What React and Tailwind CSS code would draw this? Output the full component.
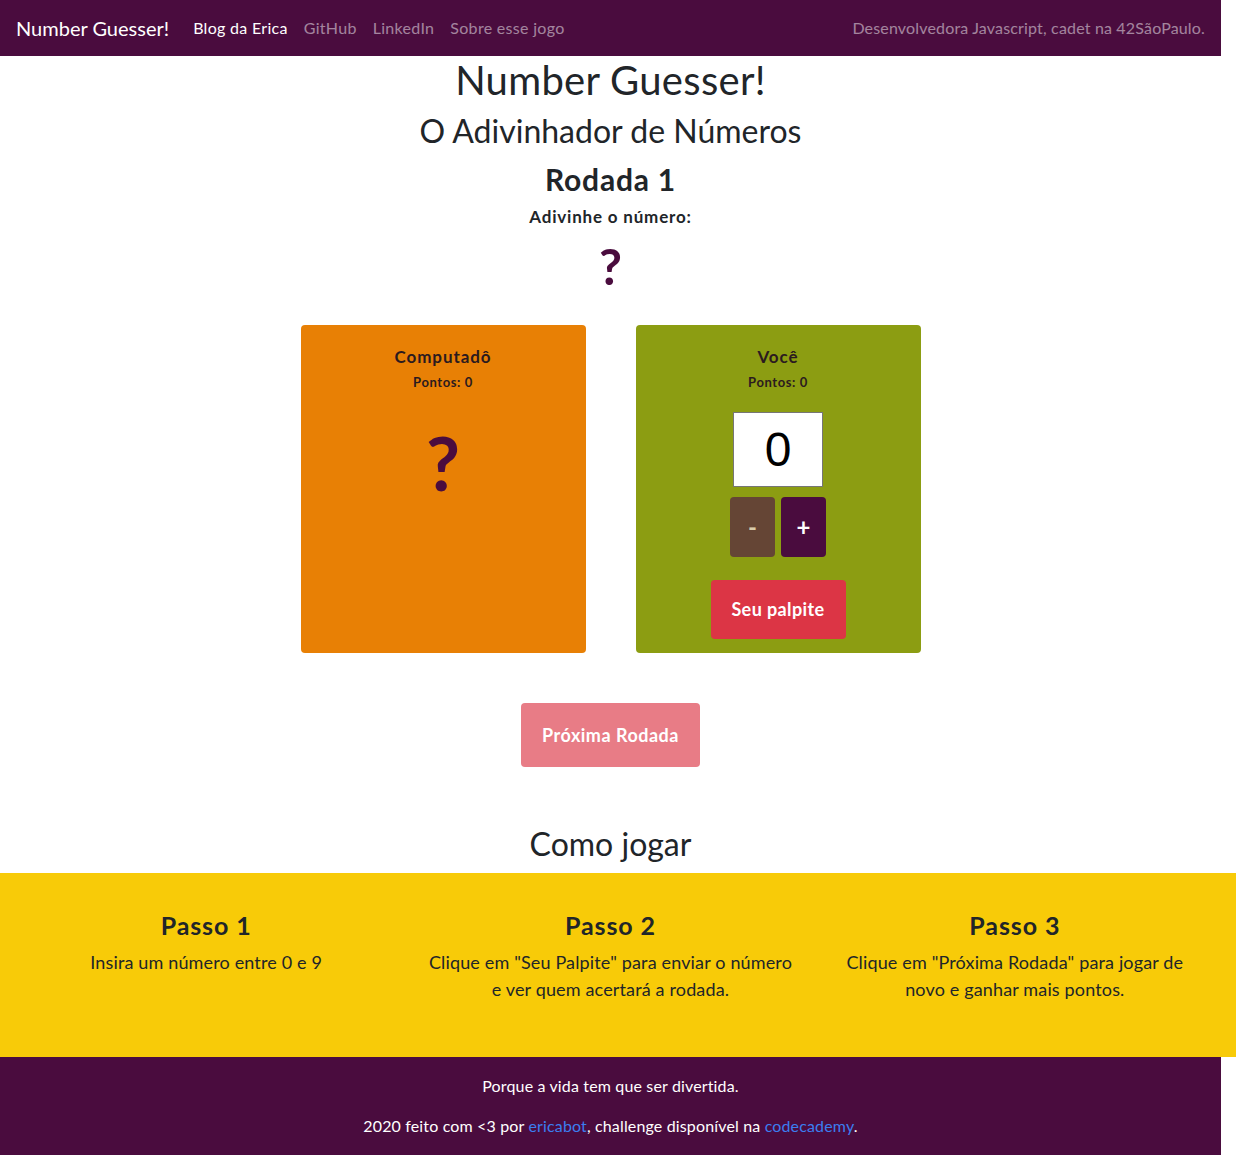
// Number Guesser — página do jogo

const FONT = "font-['Lato','Noto_Sans',sans-serif]";

const NAV_LINKS = [
  { label: "Blog da Erica", active: true },
  { label: "GitHub" },
  { label: "LinkedIn" },
  { label: "Sobre esse jogo" },
];

const STEPS = [
  { title: "Passo 1", text: "Insira um número entre 0 e 9" },
  { title: "Passo 2", text: 'Clique em "Seu Palpite" para enviar o número e ver quem acertará a rodada.' },
  { title: "Passo 3", text: 'Clique em "Próxima Rodada" para jogar de novo e ganhar mais pontos.' },
];

function Navbar() {
  return (
    <nav className="h-14 bg-[#4a0c3e] flex items-center px-4">
      <span className="text-[20px] text-white mr-6">Number Guesser!</span>
      <ul className="flex gap-4 text-[16px] tracking-[0.3px]">
        {NAV_LINKS.map(l => (
          <li key={l.label} className={l.active ? "text-white" : "text-white/50"}>{l.label}</li>
        ))}
      </ul>
      <span className="ml-auto text-[16px] tracking-[0.17px] text-white/50">Desenvolvedora Javascript, cadet na 42SãoPaulo.</span>
    </nav>
  );
}

function PlayerCard({ name, color, children }) {
  return (
    <div className={`w-[285px] h-[328px] rounded ${color} flex flex-col items-center pt-[21px]`}>
      <h4 className="text-[17px] font-bold leading-[22px] tracking-[0.9px] text-[#2b1a1f]">{name}</h4>
      <p className="text-[13px] font-bold leading-[18px] tracking-[0.6px] mt-[5px] text-[#2b1a1f]">Pontos: 0</p>
      {children}
    </div>
  );
}

export default function App() {
  return (
    <div className={`${FONT} w-[1236px] bg-white text-[#212529]`}>
      <div className="w-[1221px]">
        <Navbar />

        {/* Cabeçalho */}
        <div className="flex flex-col items-center text-center">
          <h1 className="text-[40px] leading-[48px] tracking-[0.3px]">Number Guesser!</h1>
          <h2 className="text-[32px] leading-[38px] mt-[8px]">O Adivinhador de Números</h2>
          <h3 className="text-[30px] font-bold leading-[34px] tracking-[0.8px] mt-[12px]">Rodada 1</h3>
          <p className="text-[17px] font-bold leading-[24px] tracking-[0.8px] mt-[9px]">Adivinhe o número:</p>
          <p className="text-[50px] font-bold leading-[56px] mt-[9px] text-[#4a0c3e]">?</p>
        </div>

        {/* Cartões */}
        <div className="flex justify-center gap-[50px] mt-[31px]">
          <PlayerCard name="Computadô" color="bg-[#e88005]">
            <span className="text-[74px] font-bold leading-[80px] mt-[32px] text-[#4a0c3e]">?</span>
          </PlayerCard>
          <PlayerCard name="Você" color="bg-[#8c9d12]">
            <div className="w-[90px] h-[75px] mt-[21px] bg-white border border-[#767676] flex items-center justify-center font-['Liberation_Sans',sans-serif] text-[48px] text-black">
              0
            </div>
            <div className="flex gap-[6px] mt-[10px]">
              <button className="w-[45px] h-[60px] rounded bg-[#654535] text-[#d9ccaa] text-[24px] font-bold">-</button>
              <button className="w-[45px] h-[60px] rounded bg-[#4a0c3e] text-white text-[24px] font-bold">+</button>
            </div>
            <button className="w-[135px] h-[59px] mt-[23px] rounded bg-[#dc3545] text-white text-[18px] font-bold tracking-[0.4px]">Seu palpite</button>
          </PlayerCard>
        </div>

        <div className="flex justify-center mt-[50px]">
          <button className="w-[179px] h-[64px] rounded bg-[#e87c86] text-white text-[18px] font-bold tracking-[0.5px]">Próxima Rodada</button>
        </div>

        <h2 className="text-center text-[32px] leading-[38px] mt-[58px]">Como jogar</h2>
      </div>

      {/* Como jogar */}
      <section className="w-[1236px] h-[184px] mt-[10px] bg-[#f8cb08]">
        <div className="ml-[4px] w-[1213px] grid grid-cols-3 pt-[36px]">
          {STEPS.map(s => (
            <div key={s.title} className="px-[14px] text-center">
              <h3 className="text-[25px] font-bold leading-[32px] tracking-[0.9px]">{s.title}</h3>
              <p className="text-[18px] leading-[27px] tracking-[0.15px] mt-[8px]">{s.text}</p>
            </div>
          ))}
        </div>
      </section>

      <footer className="w-[1221px] h-[98px] bg-[#4a0c3e] text-white text-[16px] tracking-[0.15px] flex flex-col items-center pt-[18px]">
        <p className="leading-[22px]">Porque a vida tem que ser divertida.</p>
        <p className="leading-[22px] mt-[18px]">
          2020 feito com &lt;3 por <a className="text-[#3b7ef0]">ericabot</a>, challenge disponível na <a className="text-[#3b7ef0]">codecademy</a>.
        </p>
      </footer>
    </div>
  );
}
